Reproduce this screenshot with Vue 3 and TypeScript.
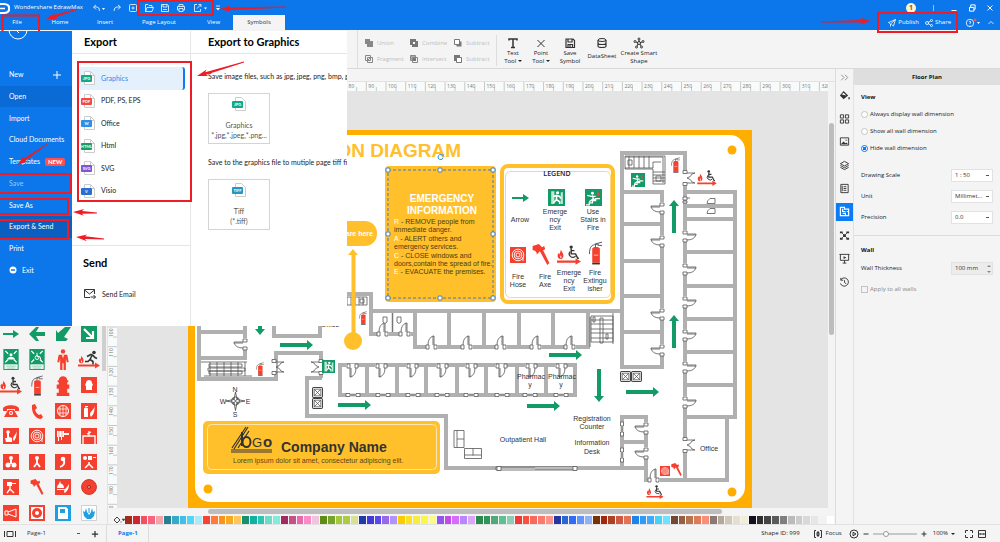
<script setup lang="ts">
import { ref } from 'vue'

type Point = [number, number]

const tabs = ['File', 'Home', 'Insert', 'Page Layout', 'View', 'Symbols']
const sideItems = ['New', 'Open', 'Import', 'Cloud Documents', 'Templates', 'Save', 'Save As', 'Export & Send', 'Print', 'Exit']

const formats = [
  { name: 'Graphics', tag: 'JPG', color: '#12a88a' },
  { name: 'PDF, PS, EPS', tag: 'PDF', color: '#f5483f' },
  { name: 'Office', tag: 'W', color: '#2f8fe8' },
  { name: 'Html', tag: 'HTML', color: '#1f9d61' },
  { name: 'SVG', tag: 'SVG', color: '#7d55d8' },
  { name: 'Visio', tag: 'V', color: '#2a6fd0' },
]

const booleans = [
  { name: 'Union', icon: 'b-union' },
  { name: 'Combine', icon: 'b-combine' },
  { name: 'Subtract', icon: 'b-subtract' },
  { name: 'Fragment', icon: 'b-fragment' },
  { name: 'Intersect', icon: 'b-intersect' },
  { name: 'Subtract', icon: 'b-subtract2' },
]

const library = [
  'arrow-thin', 'arrow-left', 'arrow-dl', 'box-arrow',
  'assembly', 'refuge', 'man', 'fire-run',
  'fire-chair', 'extinguisher', 'hydrant', 'box-hydrant',
  'phone', 'handset', 'box-globe', 'box-ext',
  'box-touch', 'hose', 'box-reel', 'box-frame',
  'box-valves', 'box-wye', 'box-hook', 'box-reelwye',
  'box-pump', 'axe', 'box-fan', 'alarm',
  'box-horn', 'box-ring', 'box-blue', 'box-hands',
]

const railIcons = ['r-fill', 'r-grid', 'r-image', 'r-layers', 'r-doc', 'r-plan', 'r-net', 'r-present', 'r-history']

const swatches = (
  'a52a1a cf2433 f25060 f76482 f4a3ab 277f92 3aa8c9 3fbfe6 4fd8f6 a8ecfb f64336 ff7b38 fb9517 f7a91f fdc55c ' +
  '159070 12b0a0 2bc6b2 6fdac6 82ebdb a12a60 c85088 e76aac fa8ac8 efc4dc 5e8c14 76a32a a3c838 acca44 d6e193 ' +
  '2138ad 4038d8 5a48ea 9768ec b492fb fbcb05 fae122 faec3c fbf64a fdfb86 9354ea c24ce8 d66bfc b788fb dba5fb ' +
  '2b8b4d 33945a 4eab77 5fbf92 8cceb4 ef3a39 fc4f3d f6695e fb7a6f fd9388 24369f 2768d0 2f6bf8 6493fb 8fb2f6 ' +
  '773206 a3270f ab4224 cf5a43 e27456 1f84ea 309af9 42aafc 46d3f5 6fe2fd 704a32 95603f b6754e de7b58 fb8e79 ' +
  '8b7a74 b4a898 cfc8b6 e6dfd0 f2ecd9 12101c 2f2f2f 444444 5c5a5c 7e7e7e bbbbbb cccccc d9d9d9 e6e6e6 f2f2f2 ffffff'
).split(' ')

const rulerX = Array.from({ length: 33 }, (_, i) => ({ label: i * 10, at: 189 + (i * 197) / 10 }))
const rulerY = Array.from({ length: 20 }, (_, i) => ({ label: i * 10, at: 130 + (i * 197) / 10 }))

const doors: [number, number, number][] = [
  [662, 208, 0], [662, 241, 0], [662, 314, 0], [662, 350, 0],
  [646, 428, 0], [646, 453, 0], [245, 344, 0],
  [352, 366, -90], [381, 366, -90], [412, 366, -90], [442, 366, -90], [471, 366, -90], [501, 366, -90], [531, 366, -90], [561, 366, -90],
  [432, 347, 90], [467, 347, 90], [501, 347, 90], [536, 347, 90], [570, 347, 90], [383, 334, 90], [405, 334, 90], [654, 480, 90],
]
const eastDoors = [236, 269, 302, 335, 367, 402]
const doubleDoors: [number, number, number][] = [[685, 178, 1], [685, 445, 1], [274, 367, 1], [321, 367, -1]]
const windows = [353, 383, 413, 442, 471, 502, 530, 561]

const greenArrows: [number, number, number][] = [
  [280, 345, 0], [338, 405, 0], [549, 355, 0], [527, 406, 0], [626, 392, 0],
  [599, 369, 90], [260, 302, 90], [674, 233, -90], [674, 348, -90],
]

const emergency = [
  ['R', ' - REMOVE people from'], ['', 'immediate danger.'], ['A', ' - ALERT others and'], ['', 'emergency services.'],
  ['C', ' - CLOSE windows and'], ['', 'doors,contain the spread of fire.'], ['E', ' - EVACUATE the premises.'],
]

const legend = [
  { x: 520, y: 222, lines: ['Arrow'] },
  { x: 555, y: 214, lines: ['Emerge', 'ncy', 'Exit'] },
  { x: 593, y: 214, lines: ['Use', 'Stairs in', 'Fire'] },
  { x: 518, y: 279, lines: ['Fire', 'Hose'] },
  { x: 545, y: 279, lines: ['Fire', 'Axe'] },
  { x: 569, y: 275, lines: ['Emerge', 'ncy', 'Exit'] },
  { x: 595, y: 275, lines: ['Fire', 'Extingu', 'isher'] },
]

const handles: Point[] = [[388, 170], [440, 170], [493, 170], [388, 234], [493, 234], [388, 298], [440, 298], [493, 298]]

// Tapered pointer: thin at the tail, widening up to a barbed head.
function pointer(from: Point, to: Point, head = 11): string {
  const dx = to[0] - from[0]
  const dy = to[1] - from[1]
  const len = Math.hypot(dx, dy)
  const ux = dx / len
  const uy = dy / len
  const at = (along: number, side: number) => `${from[0] + ux * along - uy * side},${from[1] + uy * along + ux * side}`
  return [at(0, 0.4), at(len - head + 2, 1.3), at(len - head, 3.4), at(len, 0), at(len - head, -3.4), at(len - head + 2, -1.3), at(0, -0.4)].join(' ')
}

const leftPointers = [
  pointer([78, 9], [46, 19]),
  pointer([286, 7], [220, 9]),
  pointer([244, 62], [197, 76]),
  pointer([47, 144], [17, 165]),
  pointer([97, 213], [73, 212]),
  pointer([104, 239], [76, 237]),
]
const rightPointer = pointer([11, 22], [61, 21])

const view = ref('hide')
const scale = ref('1 : 50')
const unit = ref('Millimet...')
const precision = ref('0.0')
const thickness = ref('100 mm')
const page = ref('Page-1')
const zoom = ref(28)
</script>

<template>
  <div class="app">
    <svg class="defs" aria-hidden="true">
      <defs>
        <symbol id="arrow-thin" viewBox="0 0 16 16"><path d="M0 7h10V4l6 4-6 4V9H0z" fill="#129b66" /></symbol>
        <symbol id="arrow-left" viewBox="0 0 16 16"><path d="M0 8l7-7h3L7 6h9v4H7l3 5H7z" fill="#129b66" /></symbol>
        <symbol id="arrow-dl" viewBox="0 0 16 16"><path d="M1 15V4l2 3 7-6h6L9 11l4 2-2 2z" fill="#129b66" /></symbol>
        <symbol id="box-arrow" viewBox="0 0 16 16"><path d="M0 0h16v16H0z" fill="#129b66" /><path d="M3 3l8 8M12 5v7H5" stroke="#fff" stroke-width="2.200" fill="none" /></symbol>
        <symbol id="assembly" viewBox="0 0 16 22"><path d="M0 0h16v22H0z" fill="#129b66" /><path d="M2 2l3 3M14 2l-3 3M2 14l3-3M14 14l-3-3" stroke="#fff" stroke-width="1.300" /><circle cx="8" cy="6" r="1.600" fill="#fff" /><path d="M4 11c0-4 8-4 8 0z" fill="#fff" /><path d="M1 16h14v5H1z" fill="#e6f4ee" /><path d="M3 18h10M4 20h8" stroke="#7cc4a8" stroke-width=".7" /></symbol>
        <symbol id="refuge" viewBox="0 0 16 22"><path d="M0 0h16v22H0z" fill="#129b66" /><path d="M2 2l3 3M14 2l-3 3M2 14l3-3M14 14l-3-3" stroke="#fff" stroke-width="1.300" /><path d="M8 4v4h3l1 3" stroke="#fff" fill="none" /><circle cx="8" cy="9" r="2" stroke="#fff" fill="none" /><path d="M1 16h14v5H1z" fill="#e6f4ee" /><path d="M3 18h10M4 20h8" stroke="#7cc4a8" stroke-width=".7" /></symbol>
        <symbol id="man" viewBox="0 0 16 22"><circle cx="8" cy="2.500" r="2.300" fill="#f6402f" /><path d="M3.500 6h9l1.500 8h-2l-1-4v12H8.600v-7H7.400v7H5V10l-1 4H2z" fill="#f6402f" /><path d="M7 6l1 4 1-4" fill="#fff" /></symbol>
        <symbol id="flame" viewBox="0 0 8 12"><path d="M4 0c1 3 4 5 3 9-1 2-2 3-3 3S0 11 0 8c0-2 1-3 1-4l1 2C3 4 4 2 4 0z" fill="#f6402f" /><path d="M4 7c1 2 1 3 0 4-1-1-1-3 0-4z" fill="#fff" /></symbol>
        <symbol id="fire-run" viewBox="0 0 22 18"><use href="#flame" x="0" y="5" width="7" height="8" /><circle cx="16" cy="2" r="1.800" fill="#333" /><path d="M9 6l4-2 2 1 2 2 2 1M14 5l-2 4 3 2v3M12 9l-2 2H7" stroke="#333" stroke-width="1.600" fill="none" /><path d="M0 14h17v-2l5 3-5 3v-2H0z" fill="#f6402f" /></symbol>
        <symbol id="fire-chair" viewBox="0 0 22 18"><use href="#flame" x="0" y="4" width="7" height="9" /><circle cx="13" cy="1.700" r="1.500" fill="#333" /><path d="M13 3v5h4l2 4h1M13 5h3" stroke="#333" stroke-width="1.300" fill="none" /><path d="M12 6a3.200 3.200 0 1 0 5 4" stroke="#333" stroke-width="1.100" fill="none" /><path d="M0 14h17v-2l5 3-5 3v-2H0z" fill="#f6402f" /></symbol>
        <symbol id="extinguisher" viewBox="0 0 14 22"><path d="M4 7c0-2 7-2 7 0v13H4z" fill="#f6402f" /><path d="M4 20h7v1.500H4z" fill="#333" /><path d="M7 5.500V3h3M6 3l7-2M9 4h4M6 3.500C3 4 1.500 6 1.500 12" stroke="#444" stroke-width=".8" fill="none" /><path d="M5.500 13h4" stroke="#fff" stroke-width=".6" /></symbol>
        <symbol id="hydrant" viewBox="0 0 14 20"><path d="M3 5c0-5 8-5 8 0h1v2h-1v2h2v4h-2v4h2v3H1v-3h2v-4H1V9h2V7H2V5z" fill="#f6402f" /></symbol>
        <symbol id="box-red" viewBox="0 0 16 16"><path d="M0 0h16v16H0z" fill="#f6402f" /></symbol>
        <symbol id="box-hydrant" viewBox="0 0 16 16"><use href="#box-red" width="16" height="16" /><path d="M5 6c0-4 6-4 6 0l1 2-1 1v4H5V9L4 8z" fill="#fff" /></symbol>
        <symbol id="phone" viewBox="0 0 16 16"><path d="M0 6c0-5 16-5 16 0v2h-4V6H4v2H0zM5 7h6l4 7H1z" fill="#f6402f" /><circle cx="8" cy="10" r="2" fill="#fff" /><circle cx="8" cy="10" r="1" fill="#f6402f" /></symbol>
        <symbol id="handset" viewBox="0 0 16 16"><path d="M3 2l3-1 2 4-2 2c1 2 2 4 4 5l2-1 2 3-2 2C7 16 2 10 3 2z" fill="#f6402f" /></symbol>
        <symbol id="box-globe" viewBox="0 0 16 16"><use href="#box-red" width="16" height="16" /><g fill="none" stroke="#fff"><circle cx="8" cy="8" r="5.500" /><path d="M3 6h10M3 10h10M8 3v10M5 4v8M11 4v8" stroke-width=".7" /></g></symbol>
        <symbol id="box-ext" viewBox="0 0 16 16"><use href="#box-red" width="16" height="16" /><path d="M3 6c0-2 4-2 4 0v8H3zM4 3h3v1H4zM9 12c0-4 3-4 5-9-1 4 0 7-4 11z" fill="#fff" /></symbol>
        <symbol id="box-touch" viewBox="0 0 16 16"><use href="#box-red" width="16" height="16" /><circle cx="5" cy="4" r="1.800" fill="#fff" /><path d="M4 5h2v4l3 1v4H3l-1-4h2zM10 12c0-4 2-4 4-9-1 4 0 6-3 10z" fill="#fff" /></symbol>
        <symbol id="hose" viewBox="0 0 16 16"><use href="#box-red" width="16" height="16" /><g fill="none" stroke="#fff" stroke-width=".9"><circle cx="8" cy="8" r="5.800" /><circle cx="8" cy="8" r="3.900" /><circle cx="8" cy="8" r="2" /><path d="M13 10v4" /></g></symbol>
        <symbol id="box-reel" viewBox="0 0 16 16"><use href="#box-red" width="16" height="16" /><path d="M2 3h7v6H2zM3 9h1v4H3zM6 9h1v3H6zM9 5h5v2H9z" fill="#fff" /><path d="M4 3v6M7 3v6" stroke="#f6402f" stroke-width=".5" /></symbol>
        <symbol id="box-frame" viewBox="0 0 16 16"><use href="#box-red" width="16" height="16" /><path d="M2 16V8h12v8M8 3v5M6 6l4-2" stroke="#fff" stroke-width="1.300" fill="none" /></symbol>
        <symbol id="box-valves" viewBox="0 0 16 16"><use href="#box-red" width="16" height="16" /><g fill="#fff"><circle cx="8" cy="4" r="2" /><circle cx="5" cy="11" r="2.500" /><circle cx="11" cy="11" r="2.500" /><path d="M7 6h2v4H7z" /></g></symbol>
        <symbol id="box-wye" viewBox="0 0 16 16"><use href="#box-red" width="16" height="16" /><circle cx="8" cy="4" r="2" fill="#fff" /><path d="M8 5v4l-3 4M8 9l3 4" stroke="#fff" stroke-width="1.800" fill="none" /></symbol>
        <symbol id="box-hook" viewBox="0 0 16 16"><use href="#box-red" width="16" height="16" /><circle cx="8" cy="5" r="2.300" fill="#fff" /><path d="M9 6c1 4-1 6-4 7" stroke="#fff" stroke-width="1.800" fill="none" /></symbol>
        <symbol id="box-reelwye" viewBox="0 0 16 16"><use href="#box-red" width="16" height="16" /><circle cx="4" cy="4" r="2" fill="#fff" /><path d="M7 2h4v4H7zM12 3h3v1h-3z" fill="#fff" /><path d="M8 8v2l-4 4M8 10l4 4" stroke="#fff" stroke-width="1.500" fill="none" /></symbol>
        <symbol id="box-pump" viewBox="0 0 16 16"><use href="#box-red" width="16" height="16" /><path d="M4 3h5v4H4zM9 4h4v1H9z" fill="#fff" /><path d="M7 7v3l-3 4M7 10l4 4" stroke="#fff" stroke-width="1.300" fill="none" /></symbol>
        <symbol id="axe" viewBox="0 0 16 20"><path d="M0 2l6-2 3 3 2-1 1 3-2 1 6 12-2 2L7 7 4 10c0-3-2-4-4-4z" fill="#f6402f" /></symbol>
        <symbol id="box-fan" viewBox="0 0 16 16"><use href="#box-red" width="16" height="16" /><path d="M2 9c0-6 7-6 7 0zM2 10h8v1H2zM9 13c0-3 3-4 5-8 0 4-1 6-4 9zM5 2l1 3H4z" fill="#fff" /></symbol>
        <symbol id="alarm" viewBox="0 0 16 16"><circle cx="8" cy="8" r="7.500" fill="#f6402f" stroke="#c3281c" stroke-width=".8" /><circle cx="8" cy="8" r="1.800" fill="#822" /><circle cx="8" cy="8" r=".8" fill="#fff" /></symbol>
        <symbol id="box-horn" viewBox="0 0 16 16"><use href="#box-red" width="16" height="16" /><path d="M2 6h3v4H2zM5 7l8-3v8L5 9" fill="none" stroke="#fff" /></symbol>
        <symbol id="box-ring" viewBox="0 0 16 16"><use href="#box-red" width="16" height="16" /><path d="M2 2h12v12H2z" fill="#fff" /><circle cx="8" cy="8" r="5" fill="#f6402f" /><circle cx="8" cy="8" r="2" fill="#fff" /></symbol>
        <symbol id="box-blue" viewBox="0 0 16 16"><path d="M0 0h16v16H0z" fill="#1e9fe0" /><path d="M3 2h8l2 2v10H3z" fill="#fff" /><path d="M5 4h5v4H5z" fill="#1e9fe0" /></symbol>
        <symbol id="box-hands" viewBox="0 0 16 16"><path d="M.5.5h15v15H.5z" fill="#fff" stroke="#d0d0d0" /><path d="M2 6l2 1 1-4 1 4 2 3 2-3 1-4 1 4 2-1-1 5-3 3H6l-3-3z" fill="#1e9fe0" /><path d="M8 3v5" stroke="#1e9fe0" /></symbol>
        <symbol id="exit-run" viewBox="0 0 16 16"><path d="M0 0h16v16H0z" fill="#129b66" /><path d="M3 2h3v12H3zM12 3h2v11h-2z" fill="#fff" opacity=".75" /><circle cx="9" cy="3.500" r="1.500" fill="#fff" /><path d="M5 7l3-1 3 1 1 2M8 6v4l3 2v2M8 10l-3 3" stroke="#fff" stroke-width="1.500" fill="none" /></symbol>
        <symbol id="exit-stairs" viewBox="0 0 16 16"><path d="M0 0h16v16H0z" fill="#129b66" /><circle cx="7" cy="4" r="1.400" fill="#fff" /><path d="M2 6l4 1h4M7 6l1 4 3-1M8 9l-4 3M1 15h3v-2h3v-2h3V9h4" stroke="#fff" stroke-width="1.200" fill="none" /><path d="M12 2l2 3-2 2-1-2z" fill="#f6402f" /></symbol>

        <symbol id="door" viewBox="-12 -8 16 16"><path d="M-2-6h4V6h-4z" fill="#fff" /><path d="M-2-5h4v3h-4zM-2 3h4v3h-4zM-2-2h-9v1h9M-11-1q2 5 9 5" fill="#fff" stroke="#555" stroke-width=".8" /></symbol>
        <symbol id="window" viewBox="-8 -3 16 6"><path d="M-7-2H7v4H-7z" fill="#fff" /><path d="M-7-1.500h4v3h-4zM3-1.500h4v3H3zM-3 0h6M-1-1.500v3M1-1.500v3" fill="none" stroke="#555" stroke-width=".8" /></symbol>
        <symbol id="double-door" viewBox="-3 -9 14 18"><path d="M-2-8h4V8h-4z" fill="#fff" /><path d="M-2-7.500h4v3h-4zM-2 4.500h4v3h-4zM2-5h8L7-4Q6-1 2 0q4 1 5 4l3 1H2" fill="none" stroke="#555" stroke-width=".8" /></symbol>
        <symbol id="lift" viewBox="0 0 10 10"><rect x=".5" y=".5" width="9" height="9" rx="1" fill="#fff" stroke="#444" /><path d="M2 2l6 6M8 2L2 8M2 2h6v6H2z" stroke="#555" stroke-width=".7" fill="none" /></symbol>

        <symbol id="b-union" viewBox="0 0 10 10"><path d="M1 1h5v2h3v6H3V6H1z" fill="#888" /></symbol>
        <symbol id="b-combine" viewBox="0 0 10 10"><path d="M1 1h6v6H1zM3 3h6v6H3z" fill="#777" /><path d="M4 4h2v2H4z" fill="#fff" /></symbol>
        <symbol id="b-subtract" viewBox="0 0 10 10"><path d="M3.500 3.500h5v5h-5z" fill="#777" /><path d="M1.500 1.500h5v5h-5z" fill="#fff" stroke="#777" /></symbol>
        <symbol id="b-fragment" viewBox="0 0 10 10"><path d="M1.500 1.500h5v5h-5zM3.500 3.500h5v5h-5z" fill="none" stroke="#888" /><path d="M4 6l3-3" stroke="#888" /></symbol>
        <symbol id="b-intersect" viewBox="0 0 10 10"><path d="M1.500 1.500h5v5h-5z" fill="#aaa" stroke="#888" /><path d="M3.500 3.500h5v5h-5z" fill="none" stroke="#888" /><path d="M4 4h3v3H4z" fill="#777" /></symbol>
        <symbol id="b-subtract2" viewBox="0 0 10 10"><path d="M1 1h6v6H1z" fill="#777" /><path d="M3.500 3.500h5v5h-5z" fill="#fff" stroke="#777" /></symbol>

        <symbol id="r-fill" viewBox="0 0 12 12"><path d="M5 1l5 5-5 4-4-4z" fill="#333" /><path d="M3 5l2-2 3 3z" fill="#fff" /><path d="M11 8v2" stroke="#333" stroke-width="1.500" /></symbol>
        <symbol id="r-grid" viewBox="0 0 12 12"><path d="M1.500 2h3.500v3.500H1.500zM7 2h3.500v3.500H7zM1.500 7.500H5V11H1.500zM7 7.500h3.500V11H7z" fill="none" stroke="#333" /></symbol>
        <symbol id="r-image" viewBox="0 0 12 12"><path d="M1.500 2h9v8h-9z" fill="none" stroke="#333" /><path d="M2 9l3-3 2 2 1-1 2 2zM7 4h2v1H7z" fill="#333" /></symbol>
        <symbol id="r-layers" viewBox="0 0 12 12"><path d="M6 1.500l4.500 2.500L6 6.500 1.500 4zM1.500 6L6 8.500 10.500 6M1.500 8L6 10.500 10.500 8" fill="none" stroke="#333" /></symbol>
        <symbol id="r-doc" viewBox="0 0 12 12"><path d="M2 1.500h8v9H2zM5 4h3M5 6h3M5 8h3M3.500 3v6" fill="none" stroke="#333" /></symbol>
        <symbol id="r-plan" viewBox="0 0 12 12"><path d="M1.500 1.500H6v2h4.500v7h-9zM4 3v3h3M4 8h3v2M8.500 6h2" fill="none" stroke="#fff" stroke-width="1.300" /></symbol>
        <symbol id="r-net" viewBox="0 0 12 12"><path d="M1 1.500h3v2H1zM8 1.500h3v2H8zM1 8.500h3v2H1zM8 8.500h3v2H8zM4.500 4.500h3v3h-3z" fill="#333" /><path d="M3 3l6 6M9 3L3 9" stroke="#333" stroke-width=".8" /></symbol>
        <symbol id="r-present" viewBox="0 0 12 12"><path d="M.5 1.500h11M1.500 1.500V8h9V1.500M4 11h4M6 8v3" fill="none" stroke="#333" /><path d="M5 3.500l3 1.500-3 1.500z" fill="#333" /></symbol>
        <symbol id="r-history" viewBox="0 0 12 12"><path d="M2 3a4.500 4.500 0 1 1-.5 4M2 1v2.500h2.500M6 3.500V6l2 1.500" fill="none" stroke="#333" /></symbol>
      </defs>
    </svg>

    <header class="top">
      <div class="titlebar">
        <svg class="logo" viewBox="0 0 10 14"><path d="M0 3h4c7 0 7 9 0 9H0" fill="none" stroke="#fff" stroke-width="2.200" /><path d="M0 7.500h5" stroke="#fff" stroke-width="1.500" /></svg>
        <span class="brand">Wondershare EdrawMax</span>
        <div class="quick">
          <button type="button" aria-label="Undo"><svg viewBox="0 0 14 10"><path d="M4 2L1.500 4 4 6.500M2 4h3q2.500 0 2.500 4" /><path class="solid" d="M10 5h3l-1.500 2z" /></svg></button>
          <button type="button" aria-label="Redo"><svg viewBox="0 0 10 10"><path d="M6 2l2.500 2L6 6.500M8 4H5Q2 4 2 8" /></svg></button>
          <button type="button" aria-label="New"><svg viewBox="0 0 10 10"><rect x="1.500" y="1.500" width="7" height="7" rx="1" /><path d="M5 3.500v3M3.500 5h3" /></svg></button>
          <button type="button" aria-label="Open"><svg viewBox="0 0 10 10"><path d="M1.500 8.500v-7H4l1 1h3v2M1.500 8.500L3 4.500h6.500l-1.500 4z" /></svg></button>
          <button type="button" aria-label="Save"><svg viewBox="0 0 10 10"><path d="M1.500 1.500h6l1 1v6h-7zM3 1.500V4h4V2M3 6.500h4" /></svg></button>
          <button type="button" aria-label="Print"><svg viewBox="0 0 10 10"><path d="M3 3.500v-2h4v2M3 7H1.500V3.500h7V7H7M3 5.500h4v3H3z" /></svg></button>
          <button type="button" aria-label="Export"><svg viewBox="0 0 16 10"><path d="M5 1.500H2.500v7h6V6M5 5.500L8.500 2M6.500 1.500h2.500V4" /><path class="solid" d="M12 4.500h3L13.500 6.500z" /></svg></button>
          <button type="button" aria-label="Customize"><svg viewBox="0 0 8 10"><path d="M2 3h4" /><path class="solid" d="M2 5h4L4 7.500z" /></svg></button>
        </div>
        <span class="badge">1</span>
        <div class="window-buttons">
          <i class="bar"></i>
          <button type="button" aria-label="Minimize"><svg viewBox="0 0 8 8"><path d="M2 6h4" /></svg></button>
          <button type="button" aria-label="Restore"><svg viewBox="0 0 8 8"><path d="M2 3.500h3.500V6.500H2zM3 3.500v-2h3.500v3.500H5.500" /></svg></button>
          <button type="button" aria-label="Close"><svg viewBox="0 0 8 8"><path d="M2 2l4 4M6 2L2 6" /></svg></button>
        </div>
      </div>
      <nav class="tabs">
        <div class="tab-list">
          <button v-for="t in tabs" :key="t" type="button" :class="{ current: t === 'Symbols' }">{{ t }}</button>
        </div>
        <div class="actions">
          <button type="button"><svg viewBox="0 0 8 8"><path d="M7.500.5L.5 3.500l2 1.500L7.500.5 5.500 7l-2-1.500M2.500 5v2.500" /></svg>Publish</button>
          <button type="button"><svg viewBox="0 0 8 8"><circle cx="2" cy="4" r="1.500" /><circle cx="6.500" cy="1.500" r="1" /><circle cx="6.500" cy="6.500" r="1" /><path d="M3 3.500l2.500-1.500M3 4.500l2.500 1.500" /></svg>Share</button>
          <button type="button" class="help" aria-label="Help"><svg viewBox="0 0 16 10"><circle cx="5" cy="5" r="3.700" /><path d="M4 4q1-1.500 2 0 0 .7-1 1.200v.8M5 7v.7" /><circle cx="10" cy="2" r="1.500" class="dot" /><path class="solid" d="M12 4h3l-1.500 2z" /></svg></button>
          <button type="button" aria-label="Collapse"><svg viewBox="0 0 8 8"><path d="M1.500 5L4 2.500 6.500 5" /></svg></button>
        </div>
      </nav>
    </header>

    <section class="ribbon">
      <div class="ribbon-lead"></div>
      <div class="booleans">
        <button v-for="(b, i) in booleans" :key="i" type="button" disabled><svg><use :href="'#' + b.icon" /></svg>{{ b.name }}</button>
      </div>
      <div class="tools">
        <button type="button"><svg viewBox="0 0 12 12"><path d="M2 3.500V2h8v1.500M6 2v9M4 10.500h4" stroke-width="1.500" /></svg><span>Text<br />Tool <i class="caret"></i></span></button>
        <button type="button"><svg viewBox="0 0 12 12"><path d="M2.500 3l7 7M9.500 3l-7 7" /></svg><span>Point<br />Tool <i class="caret"></i></span></button>
        <button type="button"><svg viewBox="0 0 12 12"><path d="M2 2h7l1.500 1.500V10.500H2zM4 2v3h4V2M4 10V7.500h4.500V10M6 7.500V10" stroke-width="1.200" /></svg><span>Save<br />Symbol</span></button>
        <button type="button" class="single"><svg viewBox="0 0 12 12"><ellipse cx="6" cy="3" rx="4" ry="1.500" /><path d="M2 3v6q0 1.500 4 1.500T10 9V3M2 6q0 1.500 4 1.500T10 6" stroke-width="1.200" /></svg><span>DataSheet</span></button>
        <button type="button"><svg viewBox="0 0 12 12"><circle cx="6" cy="6" r="1.500" /><circle cx="6" cy="2" r="1" /><circle cx="2" cy="4.500" r="1" /><circle cx="10" cy="4.500" r="1" /><circle cx="3.500" cy="10" r="1" /><circle cx="8.500" cy="10" r="1" /><path d="M6 3v2M3 5l2 1M9 5L7 6M4 9l1-2M8 9L7 7" /></svg><span>Create Smart<br />Shape</span></button>
      </div>
    </section>

    <main class="body">
      <aside class="library">
        <div class="symbol-grid">
          <button v-for="s in library" :key="s" type="button" :aria-label="s"><svg><use :href="'#' + s" /></svg></button>
        </div>
        <div class="lib-scroll"><i></i></div>
      </aside>

      <section class="center">
        <div class="doc-strip"></div>
        <div class="corner"></div>
        <svg class="ruler-x" viewBox="117 82 711 9" preserveAspectRatio="xMinYMin slice">
          <g v-for="r in rulerX" :key="r.label">
            <path :d="`M${r.at} 82v9M${r.at + 10} 87v4`" stroke="#c8c8c8" />
            <text :x="r.at + 2" y="88">{{ r.label }}</text>
          </g>
        </svg>
        <div class="corner"></div>
        <svg class="ruler-y" viewBox="108 91 9 417" preserveAspectRatio="xMinYMin slice">
          <g v-for="r in rulerY" :key="r.label">
            <path :d="`M108 ${r.at}h9M113 ${r.at + 10}h4`" stroke="#c8c8c8" />
            <text :transform="`translate(113 ${r.at + 10}) rotate(-90)`">{{ r.label }}</text>
          </g>
        </svg>

        <div class="canvas">
          <svg class="plan" viewBox="117 91 711 417" preserveAspectRatio="xMinYMin slice">
            <path d="M188 130h564v378H188z" fill="#ffae00" />
            <rect x="195" y="135" width="550" height="367" rx="15" fill="#fff" />
            <g fill="#ffae00"><circle cx="732" cy="150" r="4.500" /><circle cx="732" cy="492" r="4.500" /><circle cx="208" cy="489" r="4.500" /></g>
            <text x="461" y="157" class="title">ON DIAGRAM</text>

            <g class="walls">
              <path d="M622 153V367H662V192M620 153H685V480M622 192H664M622 224H662M622 261H662M622 296H662M622 332H662" />
              <path d="M685 192H735V417H685M685 206H735M685 219H735M685 252H735M685 286H735M685 319H735M685 352H735M685 385H735M727 417V480H646V417H622V468M622 442H646" />
              <path d="M322 378H307V416H446V468H646" />
              <path d="M340 365H575V395H340zM367 365V395M397 365V395M426 365V395M457 365V395M486 365V395M517 365V395M546 365V395" />
              <path d="M340 294H371V334H415M371 311H622M415 311V347H588V311M449 311V347M484 311V347M519 311V347M553 311V347" />
              <path d="M199 300V379H276V353H321V378M199 332H245M245 300V358H199M274 300V336H320V300" />
            </g>

            <use v-for="(d, i) in doors" :key="'d' + i" href="#door" x="-12" y="-8" width="16" height="16" :transform="`translate(${d[0]} ${d[1]}) rotate(${d[2]})`" />
            <use v-for="y in eastDoors" :key="'e' + y" href="#door" x="-12" y="-8" width="16" height="16" :transform="`translate(685 ${y}) scale(-1 1)`" />
            <use v-for="(d, i) in doubleDoors" :key="'dd' + i" href="#double-door" x="-3" y="-9" width="14" height="18" :transform="`translate(${d[0]} ${d[1]}) scale(${d[2]} 1)`" />
            <use v-for="x in windows" :key="'w' + x" href="#window" x="-8" y="-3" width="16" height="6" :transform="`translate(${x} 395)`" />
            <use v-for="y in [429, 455]" :key="'v' + y" href="#window" x="-8" y="-3" width="16" height="6" :transform="`translate(622 ${y}) rotate(90)`" />

            <g class="fixtures">
              <path d="M496 467h80v3h-80z" />
              <path d="M497 466.500h4v4h-4zM573 466.500h4v4h-4zM501 468h34M535 469h38" />
              <path d="M454 430.500h10v17h-10zM457 430.500v17M457 439h7M464.500 448.500h17v10h-17zM464.500 455h17M473 448.500v7" />
              <path d="M625 156h40v28h-12v-15h-28zM625 168h28M625 157h38v26M629 156v12M634 156v12M639 156v12M644 156v12M649 156v12M653 168v-6h8M653 172h12M653 175h12M653 178h12M653 181h12M656 180v-4h5v5h-5zM628 160h4v5h-4z" />
              <path d="M590 317v30M613 313v31M591 316h22v26h-22zM600 318v25h3v-25zM591 320h22M591 324h22M591 329h22M591 333h22M591 338h22M595 317v5h-2v-5zM606 334v5h2v-5z" />
              <path d="M201 362h46M204 376h48M210 362v14M217 362v14M224 362v14M231 362v14M238 362v14M245 362v14M209 364h33v3h-33zM209 371h33v3h-33zM208 368h37v3h-37z" />
              <path d="M347 297h20v8h-20zM351 297v8M355 297v8M359 297v8M363 297v8M360 299h4v4h-4z" />
              <path d="M707 203.500h8v-5h-5q-3 2-3 5zM707 213.500h8v-5h-5q-3 2-3 5zM683 197h4v3h-4zM687 198h3M683 201h4v2h-4z" />
              <path d="M383 317v5q2 3 4 0v-5zM397 317v5q2 3 4 0v-5z" />
            </g>
            <path d="M392.500 313V332" stroke="#777" stroke-width="1.500" />
            <use href="#lift" x="620" y="371" width="11" height="11" /><use href="#lift" x="631" y="371" width="11" height="11" />
            <use href="#lift" x="312" y="387" width="11" height="11" /><use href="#lift" x="312" y="398" width="11" height="11" />

            <path v-for="(a, i) in greenArrows" :key="'g' + i" d="M0-2H27V-5L33 0 27 5V2H0z" fill="#129b66" :transform="`translate(${a[0]} ${a[1]}) rotate(${a[2]})`" />

            <path d="M353 249l5 6h-2.500v79h-4v-79H348z" fill="#ffc02c" />
            <circle cx="353" cy="341" r="9" fill="#ffc02c" />
            <rect x="316" y="221" width="61" height="25" rx="12" fill="#ffc02c" />
            <text x="373" y="236" class="pill">are here</text>

            <rect x="385" y="166" width="111" height="136" rx="4" fill="#ffc02c" />
            <text x="442" y="202" class="em-title">EMERGENCY</text>
            <text x="442" y="214" class="em-title">INFORMATION</text>
            <text v-for="(l, i) in emergency" :key="'l' + i" x="394" :y="224 + i * 8.400" class="em-line"><tspan fill="#fff">{{ l[0] }}</tspan>{{ l[1] }}</text>
            <rect x="388" y="170" width="105" height="128" fill="none" stroke="#4d7bb0" stroke-dasharray="3 2" />
            <rect v-for="(h, i) in handles" :key="'h' + i" :x="h[0] - 2" :y="h[1] - 2" width="4" height="4" rx="1" fill="#fff" stroke="#3c7fc4" />
            <path d="M442 155a2.500 2.500 0 1 0 1 2.500M443 154v2.500" fill="none" stroke="#2b93e8" />

            <rect x="502" y="166" width="111" height="136" rx="6" fill="#fff" stroke="#ffc02c" stroke-width="4" />
            <rect x="505.500" y="171.500" width="105" height="126" rx="5" fill="none" stroke="#fcd67f" />
            <text x="557" y="176" class="legend-title">LEGEND</text>
            <path d="M512 197h11v-3l6 4-6 4v-3h-11z" fill="#129b66" />
            <use href="#exit-run" x="548" y="189" width="17" height="17" />
            <use href="#exit-stairs" x="585" y="189" width="17" height="17" />
            <use href="#hose" x="510" y="247" width="16" height="16" />
            <use href="#axe" x="532" y="244" width="18" height="21" />
            <use href="#fire-chair" x="557" y="245" width="24" height="20" />
            <use href="#extinguisher" x="587" y="241" width="17" height="24" />
            <text v-for="(g, i) in legend" :key="'t' + i" class="label" :y="g.y"><tspan v-for="(t, j) in g.lines" :key="j" :x="g.x" :dy="j ? 8 : 0">{{ t }}</tspan></text>

            <use href="#extinguisher" x="255" y="362" width="10" height="14" />
            <use href="#extinguisher" x="670" y="157" width="11" height="16" />
            <use href="#extinguisher" x="358" y="311" width="10" height="14" />
            <use href="#exit-run" x="322" y="360" width="13" height="13" />
            <use href="#exit-stairs" x="631" y="173" width="14" height="14" />
            <use href="#fire-chair" x="697" y="170" width="20" height="16" />
            <use href="#fire-chair" x="645" y="485" width="20" height="14" />
            <use href="#hose" x="660" y="466" width="10" height="10" />
            <use href="#axe" x="671" y="463" width="11" height="13" />

            <g class="label">
              <text x="531" y="379">Pharmac</text><text x="530" y="387">y</text>
              <text x="562" y="379">Pharmac</text><text x="561" y="387">y</text>
              <text x="330" y="327">Office</text>
              <text x="523" y="442">Outpatient Hall</text>
              <text x="592" y="421">Registration</text><text x="592" y="429">Counter</text>
              <text x="592" y="445">Information</text><text x="592" y="454">Desk</text>
              <text x="709" y="451">Office</text>
              <text x="235" y="392">N</text><text x="235" y="417">S</text><text x="223" y="404">W</text><text x="248" y="404">E</text>
            </g>
            <g fill="none" stroke="#444" stroke-width=".8"><circle cx="235.500" cy="401" r="4" /><path d="M235.500 392l1.500 7.500 8 1.500-8 1.500-1.500 8-1.500-8-8-1.500 8-1.500zM233 398l5 6M238 398l-5 6" /></g>

            <rect x="203" y="421" width="237" height="53" rx="5" fill="#ffc02c" />
            <rect x="207.500" y="424.500" width="229" height="45" rx="4" fill="none" stroke="#ffe6ac" />
            <g class="mark"><path d="M232 448L246 427M234 449L248 427M238 448L249 431M231 450h41M231 452h41" /><ellipse cx="246.500" cy="442" rx="4" ry="5" stroke-width="2" /><path d="M242 432v14" stroke-width="2" /></g>
            <text x="252" y="447" class="mark-g">G</text><text x="263" y="447" class="mark-o">o</text>
            <text x="281" y="452" class="company">Company Name</text>
            <text x="233" y="463" class="tagline">Lorem ipsum dolor sit amet, consectetur adipiscing elit.</text>
          </svg>
        </div>
        <div class="v-scroll"><i></i></div>
        <div class="h-scroll"><i></i></div>
        <div class="palette">
          <svg viewBox="0 0 12 8"><path d="M4 1l3 3-3 3-3-3z" fill="none" stroke="#444" /><path d="M7 6h2M9 3h3L10.500 5z" fill="#444" stroke="#444" stroke-width=".5" /></svg>
          <div class="swatches"><i v-for="(c, i) in swatches" :key="i" :style="{ background: '#' + c }"></i></div>
        </div>
      </section>

      <nav class="rail">
        <button type="button" class="fold" aria-label="Fold"><svg viewBox="0 0 12 12"><path d="M2.500 3l3 3-3 3M6.500 3l3 3-3 3" fill="none" stroke="#888" /></svg></button>
        <div class="rail-list">
          <button v-for="r in railIcons" :key="r" type="button" :class="{ active: r === 'r-plan' }" :aria-label="r.slice(2)"><svg><use :href="'#' + r" /></svg></button>
        </div>
      </nav>

      <aside class="panel">
        <h2>Floor Plan</h2>
        <form class="settings" @submit.prevent>
          <h3>View</h3>
          <div class="radios">
            <label><input v-model="view" type="radio" name="view" value="always" />Always display wall dimension</label>
            <label><input v-model="view" type="radio" name="view" value="all" />Show all wall dimension</label>
            <label><input v-model="view" type="radio" name="view" value="hide" />Hide wall dimension</label>
          </div>
          <div class="fields">
            <label for="scale">Drawing Scale</label><select id="scale" v-model="scale"><option>1 : 50</option></select>
            <label for="unit">Unit</label><select id="unit" v-model="unit"><option>Millimet...</option></select>
            <label for="precision">Precision</label><select id="precision" v-model="precision"><option>0.0</option></select>
          </div>
        </form>
        <form class="settings wall" @submit.prevent>
          <h3>Wall</h3>
          <div class="fields">
            <label for="thick">Wall Thickness</label>
            <div class="spin"><input id="thick" v-model="thickness" type="text" disabled /><svg viewBox="0 0 6 12"><path d="M1 4l2-2 2 2zM1 8l2 2 2-2z" fill="#888" /></svg></div>
          </div>
          <label class="check"><input type="checkbox" disabled />Apply to all walls</label>
        </form>
      </aside>
    </main>

    <footer class="status">
      <svg class="pages-icon" viewBox="0 0 12 10"><path d="M.5 2v6M11.500 2v6M3 2.500h6v5H3z" /></svg>
      <select v-model="page" aria-label="Page"><option>Page-1</option></select>
      <button type="button" class="add" aria-label="Add page"><svg viewBox="0 0 8 8"><path d="M4 1.500v5M1.500 4h5" /></svg></button>
      <button type="button" class="page-tab">Page-1</button>
      <div class="status-right">
        <span class="shape-id">Shape ID: 999</span>
        <button type="button" class="focus"><svg viewBox="0 0 10 10"><path d="M3 1.500H1.500v7H3M7 1.500h1.500v7H7M4 3.500h2v3H4zM5 2v6" /></svg>Focus</button>
        <button type="button" aria-label="Play"><svg viewBox="0 0 10 10"><circle cx="5" cy="5" r="4" /><path d="M4 3.200L7 5 4 6.800z" /></svg></button>
        <button type="button" class="step" aria-label="Zoom out"><svg viewBox="0 0 8 8"><path d="M1.500 4h5" /></svg></button>
        <input v-model="zoom" type="range" min="0" max="100" aria-label="Zoom" />
        <button type="button" class="step" aria-label="Zoom in"><svg viewBox="0 0 8 8"><path d="M4 1.500v5M1.500 4h5" /></svg></button>
        <button type="button" class="percent">100% <i class="caret"></i></button>
        <button type="button" aria-label="Fit page"><svg viewBox="0 0 10 10"><path d="M1.500 4V1.500H4M6 1.500h2.500V4M8.500 6v2.500H6M4 8.500H1.500V6" /></svg></button>
        <button type="button" aria-label="Fit width"><svg viewBox="0 0 10 10"><path d="M1.500 1.500h7v7h-7zM3 5h4M3 4v2M7 4v2" /></svg></button>
      </div>
    </footer>

    <section class="backstage">
      <nav class="side">
        <svg class="back" viewBox="0 0 20 10"><circle cx="10" cy="-1" r="9" /><path d="M9-2l-1 1 3 3" /></svg>
        <button v-for="s in sideItems" :key="s" type="button" :class="{ hover: s === 'Open', chosen: s === 'Export & Send', faded: s === 'Save' }">
          <svg v-if="s === 'Exit'" class="exit" viewBox="0 0 8 8"><circle cx="4" cy="4" r="3.500" fill="#fff" /><path d="M2 4h4" stroke="#0b77ea" stroke-width="1.500" /></svg>
          <span>{{ s }}</span>
          <em v-if="s === 'Templates'">NEW</em>
          <svg v-if="s === 'New'" class="plus" viewBox="0 0 8 8"><path d="M4 0v8M0 4h8" stroke="#fff" /></svg>
        </button>
      </nav>
      <div class="formats">
        <h1>Export</h1>
        <div class="format-list">
          <button v-for="(f, i) in formats" :key="f.name" type="button" :class="{ on: i === 0 }">
            <svg viewBox="0 0 14 14"><path d="M3.500.5h6l4 4v9h-10z" fill="#fff" stroke="#ccc" /><path d="M9.500.5v4h4" fill="none" stroke="#ccc" /><rect x="0" y="4" width="11" height="7" rx="1" :fill="f.color" /><text x="5.500" y="9">{{ f.tag }}</text></svg>{{ f.name }}
          </button>
        </div>
        <div class="send">
          <h1>Send</h1>
          <button type="button"><svg viewBox="0 0 14 12"><path d="M7 9.500H1.500v-8h10V6M1.500 2l5 4 5-4M7.500 9h5M10.500 7l2 2-2 2" fill="none" stroke="#333" /></svg>Send Email</button>
        </div>
      </div>
      <div class="detail">
        <h1>Export to Graphics</h1>
        <div class="detail-body">
          <p>Save image files, such as jpg, jpeg, png, bmp, g</p>
          <button type="button" class="card"><svg viewBox="0 0 14 14"><path d="M3.500.5h6l4 4v9h-10z" fill="#fff" stroke="#ccc" /><rect x="0" y="4" width="11" height="7" rx="1" fill="#12a88a" /><text x="5.500" y="9">JPG</text></svg><span>Graphics<br />*.jpg,*.jpeg,*.png...</span></button>
          <p>Save to the graphics file to mutiple page tiff file</p>
          <button type="button" class="card"><svg viewBox="0 0 14 14"><path d="M3.500.5h6l4 4v9h-10z" fill="#fff" stroke="#ccc" /><rect x="0" y="4" width="11" height="7" rx="1" fill="#2597c0" /><text x="5.500" y="9">TIFF</text></svg><span>Tiff<br />(*.tiff)</span></button>
        </div>
      </div>
    </section>

    <svg class="notes notes-left" viewBox="0 0 300 260">
      <path d="M2.500 31V15.500H39V31M138 0V15H213V0M138 1H213M78 62H191V201H78zM0 174H71V193H0M0 199H68V214H0M0 220H68V239H0" />
      <polygon v-for="p in leftPointers" :key="p" :points="p" />
    </svg>
    <svg class="notes notes-right" viewBox="0 0 190 40">
      <path d="M68 13H147V32H68z" />
      <polygon :points="rightPointer" />
    </svg>
  </div>
</template>

<style>
html, body { margin: 0; overflow: hidden; }
</style>

<style scoped>
.app { position: relative; display: flex; flex-direction: column; height: 100vh; overflow: hidden; background: #f4f4f4; color: #222; font: 6px/9px "Open Sans", "Noto Sans", sans-serif; }
.app *, .app *::before { box-sizing: border-box; }
.defs { position: absolute; width: 0; height: 0; }
button { display: flex; align-items: center; border: 0; padding: 0; background: none; color: inherit; font: inherit; white-space: nowrap; }
svg { display: block; flex: none; }
h1, h2, h3, p { margin: 0; }
.caret { display: inline-block; border: 2px solid transparent; border-top-color: currentColor; border-bottom: 0; vertical-align: middle; }

.top { flex: none; height: 30px; background: #0b77ea; color: #fff; }
.top svg { fill: none; stroke: #fff; stroke-width: 0.8; }
.top .solid { fill: #fff; stroke: none; }
.titlebar, .tabs { display: flex; align-items: center; height: 15px; }
.logo { width: 10px; height: 14px; }
.brand { width: 78px; margin-left: 4px; }
.quick { display: flex; align-items: center; gap: 6px; }
.quick button svg { height: 10px; }
.quick button { height: 12px; }
.badge { margin-left: auto; margin-right: 17px; width: 10px; height: 10px; border-radius: 5px; background: #fff2cf; color: #8a5a12; font-size: 7px; font-weight: 700; line-height: 10px; text-align: center; }
.window-buttons { display: flex; align-items: center; gap: 8px; padding-right: 5px; }
.window-buttons svg { width: 10px; height: 10px; }
.window-buttons .bar { width: 1px; height: 6px; margin-right: 7px; background: #8dbff5; }
.tab-list { display: grid; grid-template-columns: 34px 52px 38px 70px 39px 52px; align-self: stretch; }
.tab-list button { justify-content: center; }
.tab-list .current { background: #f4f4f4; color: #333; }
.actions { display: flex; align-items: center; margin-left: auto; gap: 6px; padding-right: 5px; }
.actions button { gap: 2px; height: 13px; }
.actions svg { width: 8px; height: 8px; }
.actions .help { margin-left: 8px; }
.actions .help svg { width: 16px; height: 10px; }
.actions .dot { fill: #ff4a4a; stroke: none; }

.ribbon { display: flex; flex: none; height: 39px; border-bottom: 1px solid #d9d9d9; }
.ribbon-lead { width: 358px; border-right: 1px solid #ddd; }
.booleans { display: grid; grid-template-columns: 45px 44px 32px; grid-template-rows: 16px 16px; width: 139px; margin: 5px 0 2px; padding-left: 6px; border-right: 1px solid #ddd; }
.booleans button { gap: 3px; color: #bdbdbd; }
.booleans svg { width: 10px; height: 10px; }
.tools { display: grid; grid-template-columns: 28px 28px 30px 34px 40px; align-items: start; padding: 7px 0 0 2px; }
.tools button { flex-direction: column; line-height: 8px; text-align: center; }
.tools .single { gap: 3px; }
.tools svg { width: 12px; height: 12px; fill: none; stroke: #333; }

.body { display: flex; flex: 1; min-height: 0; }
.library { display: flex; align-items: flex-end; width: 108px; padding-bottom: 3px; flex: none; border-right: 1px solid #e2e2e2; }
.symbol-grid { display: grid; grid-template-columns: repeat(4, 26px); grid-auto-rows: 16px; align-content: space-between; height: 195px; width: 102px; margin-left: -2px; }
.symbol-grid button { justify-content: center; }
.symbol-grid svg { width: 22px; height: 16px; overflow: visible; }
.symbol-grid button:nth-child(n + 5):nth-child(-n + 11) svg { height: 21px; }
.lib-scroll { align-self: stretch; width: 4px; margin-left: 2px; }
.lib-scroll i { display: block; height: 302px; background: #cfcfcf; }

.center { display: grid; flex: 1; min-width: 0; grid-template-columns: 9px minmax(0, 1fr) 7px; grid-template-rows: 13px 9px minmax(0, 1fr) 7px 9px; background: #f4f4f4; }
.doc-strip { grid-column: 1 / -1; border-bottom: 1px solid #e2e2e2; }
.ruler-x, .ruler-y { width: 100%; height: 100%; background: #f9fbfa; }
.ruler-x text, .ruler-y text { font-size: 5px; fill: #777; }
.canvas { overflow: hidden; background: #e4e4e4; }
.plan { width: 100%; height: 100%; font-family: "Liberation Sans", Arial, sans-serif; }
.v-scroll { padding: 32px 1px 0; }
.v-scroll i { display: block; height: 55%; border-radius: 3px; background: #bdbdbd; }
.h-scroll { grid-column: 1 / -1; padding: 1px 113px 1px 100px; }
.h-scroll i { display: block; height: 5px; border-radius: 3px; background: #bdbdbd; }
.palette { grid-column: 1 / -1; display: flex; align-items: center; padding: 0 1px 0 5px; }
.palette svg { width: 12px; height: 8px; }
.swatches { display: flex; flex: 1; height: 8px; }
.swatches i { flex: 1; border-right: 1px solid #f4f4f4; }

.title { font-size: 19px; font-weight: 700; fill: #ffc02c; text-anchor: end; }
.pill { font-size: 7px; font-weight: 700; fill: #fff; text-anchor: end; }
.em-title { font-size: 10px; font-weight: 700; fill: #fff; text-anchor: middle; }
.em-line { font-size: 7px; fill: #4d3a10; }
.legend-title { font-family: "Open Sans", sans-serif; font-size: 7px; font-weight: 600; fill: #222; text-anchor: middle; }
.label { font-size: 7px; fill: #333; text-anchor: middle; }
.walls { fill: none; stroke: #b0b0b0; stroke-width: 4; }
.fixtures { fill: #fff; stroke: #555; stroke-width: 0.8; }
.mark { fill: none; stroke: #333; stroke-width: 1.2; }
.mark-g { font-size: 13px; fill: #333; }
.mark-o { font-size: 15px; font-weight: 700; fill: #333; }
.company { font-size: 14px; font-weight: 700; fill: #333; }
.tagline { font-size: 7px; fill: #5c4510; }

.rail { flex: none; width: 18px; border-left: 1px solid #dcdcdc; }
.rail button { justify-content: center; width: 100%; }
.rail .fold { height: 17px; }
.rail-list { display: flex; flex-direction: column; justify-content: space-between; height: 205px; }
.rail-list button { height: 18px; }
.rail svg { width: 11px; height: 11px; }
.rail .active { background: #0a7cf5; }

.panel { flex: none; width: 147px; border-left: 1px solid #e2e2e2; }
.panel h2 { height: 16px; background: #dedede; font-size: 6px; line-height: 17px; text-align: center; color: #111; }
.panel h3 { font-size: 6px; line-height: 9px; color: #111; }
.settings { padding: 8px 7px 11px; }
.radios { display: grid; gap: 8px; margin: 8px 0 16px; }
.radios label, .check { display: flex; align-items: center; gap: 2px; }
.radios input { appearance: none; width: 7px; height: 7px; margin: 0; border: 1px solid #c4c4c4; border-radius: 50%; background: #fff; }
.radios input:checked { border-color: #0a7cf5; background: radial-gradient(#0a7cf5 45%, #fff 50%); }
.fields { display: grid; grid-template-columns: 1fr 42px; align-items: center; row-gap: 8px; }
.fields select, .spin { height: 13px; border: 1px solid #e2e2e2; background: #fff; }
select { appearance: none; padding: 0 3px; color: #333; font: inherit; background: none; border: 0; border-radius: 0; }
.fields select { background: linear-gradient(#555, #555) no-repeat right 3px center / 3px 1px, #fff; }
.wall { border-top: 1px solid #dcdcdc; padding-top: 10px; }
.wall .fields { margin: 7px 0 10px; }
.spin { display: flex; align-items: center; background: #ececec; }
.spin input { flex: 1; min-width: 0; border: 0; padding: 0 3px; background: none; color: #333; font: inherit; }
.spin svg { width: 6px; height: 12px; }
.check { color: #888; }
.check input { appearance: none; width: 7px; height: 7px; margin: 0; border: 1px solid #c4c4c4; }

.status { display: flex; align-items: center; flex: none; height: 18px; padding: 0 13px 0 4px; border-top: 1px solid #e2e2e2; }
.status svg { width: 10px; height: 10px; fill: none; stroke: #333; }
.status .pages-icon { width: 12px; }
.status select { width: 57px; margin-left: 8px; background: linear-gradient(#555, #555) no-repeat right 1px center / 3px 1px; }
.status .add { margin: 0 6px 0 9px; }
.status .page-tab { height: 17px; padding: 0 10px 0 11px; border: solid #dcdcdc; border-width: 0 1px; color: #0a7cf5; font-weight: 700; }
.status-right { display: flex; align-items: center; margin-left: auto; gap: 3px; }
.shape-id { margin-right: 10px; }
.status .focus { gap: 3px; margin-right: 4px; }
.status .step svg { width: 8px; height: 8px; }
.status .percent { gap: 3px; margin: 0 6px 0 2px; }
.status input { appearance: none; width: 44px; height: 2px; margin: 0; background: #c8c8c8; }
.status input::-webkit-slider-thumb { appearance: none; width: 6px; height: 6px; border: 1px solid #999; border-radius: 50%; background: #fff; }

.backstage { position: absolute; left: 0; top: 31px; display: flex; width: 347px; height: 295px; overflow: hidden; background: #fff; font-family: Lato, "Open Sans", sans-serif; font-size: 7px; }
.side { position: relative; display: flex; flex-direction: column; width: 72px; padding: 33px 0 45px; background: #0b77ea; color: #fff; }
.back { position: absolute; left: 8px; top: 0; width: 20px; height: 10px; fill: none; stroke: #fff; }
.side button { flex: 1; padding: 0 9px; gap: 5px; }
.side .hover { background: #0a6bd6; }
.side .chosen { background: #0a5fc0; }
.side .faded { color: #9cc8f7; }
.side em { padding: 0 3px; border-radius: 2px; background: #ff5050; font-style: normal; font-weight: 700; line-height: 8px; font-size: 6px; }
.side .plus { width: 8px; height: 8px; margin-left: auto; margin-right: 2px; }
.side .exit { width: 8px; height: 8px; }
.backstage h1 { font-size: 11px; line-height: 22px; color: #000; }
.formats { display: flex; flex-direction: column; width: 119px; border-right: 1px solid #e6e6e6; }
.formats > h1 { border-bottom: 1px solid #e6e6e6; padding-left: 12px; }
.format-list { display: flex; flex-direction: column; height: 135px; margin: 13px 5px 43px 7px; }
.format-list button { flex: 1; gap: 6px; padding-left: 2px; }
.format-list svg { width: 14px; height: 14px; }
.backstage svg text { font-size: 4px; font-weight: 700; fill: #fff; text-anchor: middle; }
.format-list .on { border-right: 2px solid #0a7cf5; border-radius: 3px; background: #e4f1fd; color: #2b8bea; }
.send { flex: 1; padding: 6px 0 0 11px; border-top: 1px solid #e6e6e6; }
.send button { gap: 5px; margin-top: 14px; }
.send svg { width: 14px; height: 12px; }
.detail { flex: 1; min-width: 0; }
.detail h1 { padding-left: 17px; border-bottom: 1px solid #e6e6e6; }
.detail-body { padding: 18px 0 0 17px; white-space: nowrap; }
.card { flex-direction: column; width: 62px; height: 51px; margin: 12px 0 14px; padding-top: 3px; border: 1px solid #d4d4d4; line-height: 10px; color: #555; }
.card svg { width: 14px; height: 14px; margin-bottom: 9px; }

.notes { position: absolute; top: 0; pointer-events: none; fill: none; stroke: #ee1c25; stroke-width: 2; }
.notes polygon { fill: #ee1c25; stroke: none; }
.notes-left { left: 0; width: 300px; height: 260px; }
.notes-right { right: 0; width: 190px; height: 40px; }
</style>
